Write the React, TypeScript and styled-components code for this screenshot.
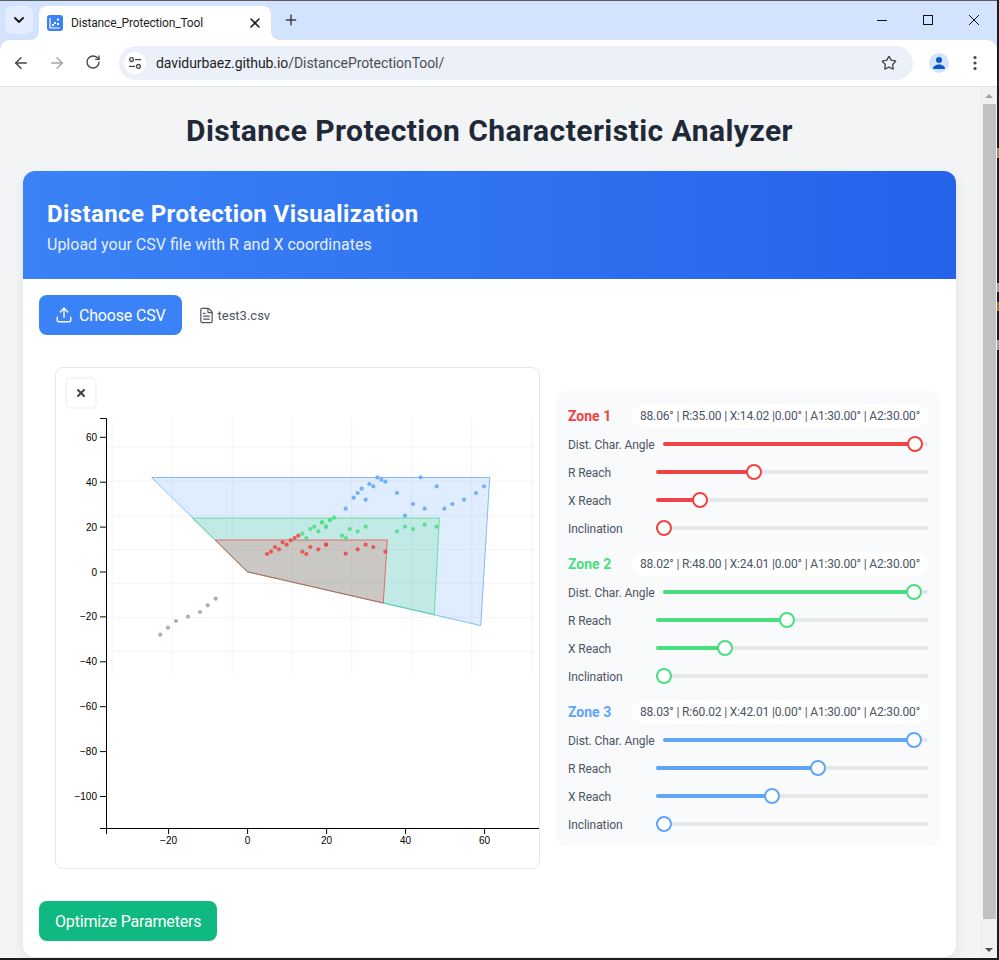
import React from "react";
import styled, { createGlobalStyle } from "styled-components";
import { ArrowLeft, ArrowRight, RotateCw, Star, Upload, FileText, X, Plus, ChevronDown } from "lucide-react";

const Global = createGlobalStyle`
  html, body { margin: 0; padding: 0; width: 999px; height: 960px; overflow: hidden; background: #1c1c1c; }
  * { box-sizing: border-box; }
`;

const Frame = styled.div`
  width: 999px;
  height: 960px;
  overflow: hidden;
  background: #1c1c1c;
  display: flex;
  align-items: flex-start;
`;
const Win = styled.div`
  width: 997px;
  height: 958px;
  flex: none;
  display: flex;
  flex-direction: column;
  overflow: hidden;
  background: #d3e3fd;
  border-top: 1px solid #5c5c60;
  font-family: "Roboto", "Liberation Sans", sans-serif;
`;
const DesktopEdge = styled.div`
  width: 2px;
  height: 960px;
  flex: none;
  background: linear-gradient(
    180deg,
    #1c1c1c 148px,
    #a08868 148px 158px,
    #1c1c1c 158px 283px,
    #8fa3a8 283px 292px,
    #1c1c1c 292px 302px,
    #8f7438 302px 311px,
    #1c1c1c 311px 340px,
    #8fa3a8 340px 350px,
    #1c1c1c 350px
  );
`;
const TabStrip = styled.div`
  height: 39px;
  flex: none;
  display: flex;
  align-items: flex-start;
  background: #d3e3fd;
  padding: 5px 0 0 5px;
`;
const TabMenu = styled.div`
  width: 28px;
  height: 28px;
  border-radius: 8px;
  background: #e4edfd;
  color: #1f1f1f;
  display: flex;
  align-items: center;
  justify-content: center;
`;
const Tab = styled.div`
  position: relative;
  width: 232px;
  height: 34px;
  margin-left: 6px;
  border-radius: 8px 8px 0 0;
  background: #fff;
  display: flex;
  align-items: center;
  padding: 0 8px 0 8px;
  color: #1f1f1f;
  &::before,
  &::after {
    content: "";
    position: absolute;
    bottom: 0;
    width: 8px;
    height: 8px;
  }
  &::before {
    left: -8px;
    background: radial-gradient(circle at 0 0, #d3e3fd 7.5px, #fff 8px);
  }
  &::after {
    right: -8px;
    background: radial-gradient(circle at 100% 0, #d3e3fd 7.5px, #fff 8px);
  }
`;
const TabTitle = styled.span`
  flex: 1;
  margin-left: 8px;
  font-size: 12px;
  letter-spacing: -0.17px;
  white-space: nowrap;
`;
const NewTab = styled.div`
  width: 20px;
  height: 28px;
  margin-left: 10px;
  display: flex;
  align-items: center;
  justify-content: center;
  color: #3c4043;
`;
const Controls = styled.div`
  margin-left: auto;
  display: flex;
  height: 28px;
  align-items: center;
`;
const Control = styled.div`
  width: 46px;
  height: 28px;
  display: flex;
  align-items: center;
  justify-content: center;
`;
const ToolBar = styled.div`
  height: 46px;
  flex: none;
  display: flex;
  align-items: center;
  background: #fff;
  border-radius: 10px 10px 0 0;
  padding: 0 12px 0 0;
`;
const NavButton = styled.div<{ $muted?: boolean }>`
  width: 36px;
  display: flex;
  justify-content: center;
  color: ${(p) => (p.$muted ? "#a5a7aa" : "#474747")};
`;
const NavGroup = styled.div`
  display: flex;
  margin-left: 3px;
  width: 116px;
`;
const Omnibox = styled.div`
  width: 794px;
  height: 34px;
  border-radius: 17px;
  background: #ebf0f9;
  display: flex;
  align-items: center;
  padding: 0 16px 0 5px;
  font-size: 14px;
  letter-spacing: -0.07px;
  color: #1f1f1f;
`;
const SiteIcon = styled.div`
  width: 22px;
  height: 22px;
  border-radius: 50%;
  background: #fff;
  display: flex;
  align-items: center;
  justify-content: center;
  margin-right: 10px;
`;
const Host = styled.span`
  color: #1f1f1f;
`;
const Path = styled.span`
  flex: 1;
  color: #4b4f54;
`;
const Avatar = styled.div`
  width: 20px;
  height: 20px;
  border-radius: 50%;
  background: #d3e3fd;
  margin-left: 16px;
  display: flex;
  align-items: center;
  justify-content: center;
`;
const MenuDots = styled.div`
  margin-left: 24px;
  display: flex;
  align-items: center;
`;
const Viewport = styled.div`
  flex: 1;
  min-height: 0;
  display: flex;
  border-top: 1px solid #e1e3e1;
`;
const Page = styled.main`
  width: 980px;
  flex: none;
  height: 100%;
  overflow: hidden;
  background: #f3f4f6;
  padding: 26px 24px 0 23px;
`;
const Heading = styled.h1`
  margin: 0 0 22px;
  font-size: 30px;
  line-height: 36px;
  font-weight: 700;
  letter-spacing: 0.45px;
  color: #1f2937;
  text-align: center;
`;
const Card = styled.section`
  background: #fff;
  border-radius: 12px;
  overflow: hidden;
  box-shadow: 0 4px 12px rgba(0, 0, 0, 0.08);
  padding-bottom: 16px;
`;
const Banner = styled.header`
  height: 108px;
  background: linear-gradient(90deg, #3b82f6, #2563eb);
  color: #fff;
  padding: 29px 24px 0 24px;
`;
const BannerTitle = styled.h2`
  margin: 0;
  font-size: 24px;
  line-height: 28px;
  font-weight: 700;
  letter-spacing: 0.4px;
`;
const BannerSub = styled.p`
  margin: 5px 0 0;
  font-size: 16px;
  line-height: 24px;
  color: #e5efff;
`;
const Body = styled.div`
  padding: 16px 16px 0;
`;
const FileRow = styled.div`
  display: flex;
  align-items: center;
`;
const PrimaryButton = styled.button<{ $bg: string }>`
  height: 40px;
  border: 0;
  border-radius: 8px;
  background: ${(p) => p.$bg};
  color: #fff;
  font-family: inherit;
  font-size: 16px;
  letter-spacing: -0.18px;
  display: inline-flex;
  align-items: center;
  gap: 6px;
  padding: 0 16px;
`;
const FileName = styled.span`
  margin-left: 16px;
  display: inline-flex;
  align-items: center;
  gap: 3px;
  font-size: 13px;
  color: #4b5563;
`;
const Workspace = styled.div`
  margin-top: 16px;
  padding: 16px 0 16px 16px;
  display: flex;
  align-items: center;
  gap: 16px;
`;
const ChartCard = styled.div`
  width: 485px;
  height: 502px;
  flex: none;
  border: 1px solid #e5e7eb;
  border-radius: 8px;
  background: #fff;
`;
const ChartTools = styled.div`
  padding: 9px 9px 0;
  height: 41px;
`;
const IconButton = styled.div`
  width: 32px;
  height: 32px;
  border: 2px solid #f3f4f6;
  border-radius: 6px;
  background: #fff;
  color: #374151;
  display: flex;
  align-items: center;
  justify-content: center;
`;
const ChartSvg = styled.svg`
  display: block;
  font-family: "Liberation Sans", Arial, sans-serif;
  font-size: 10px;
`;
const Panel = styled.div`
  width: 384px;
  flex: none;
  background: #f9fafb;
  border-radius: 8px;
  padding: 13px 12px 11px;
  display: flex;
  flex-direction: column;
  gap: 14px;
`;
const ZoneBlock = styled.div`
  display: flex;
  flex-direction: column;
  gap: 8px;
`;
const ZoneHead = styled.div`
  height: 24px;
  display: flex;
  align-items: center;
  justify-content: space-between;
  margin-bottom: -2px;
`;
const ZoneName = styled.span<{ $c: string }>`
  font-size: 14px;
  font-weight: 700;
  white-space: nowrap;
  color: ${(p) => p.$c};
`;
const Pill = styled.span`
  height: 24px;
  border-radius: 12px;
  background: #fff;
  padding: 4px 8px;
  font-size: 12px;
  line-height: 16px;
  letter-spacing: -0.16px;
  color: #4b5563;
  white-space: nowrap;
`;
const SliderRow = styled.div`
  height: 20px;
  display: flex;
  align-items: center;
  gap: 8px;
`;
const SliderLabel = styled.span`
  min-width: 80px;
  padding-top: 1px;
  font-size: 12px;
  letter-spacing: -0.08px;
  color: #4b5563;
  white-space: nowrap;
`;
const Track = styled.div`
  flex: 1;
  height: 4px;
  border-radius: 2px;
  background: #e5e7eb;
  position: relative;
  top: -0.5px;
`;
const Fill = styled.div<{ $c: string }>`
  position: absolute;
  left: 0;
  top: 0;
  bottom: 0;
  border-radius: 2px;
  background: ${(p) => p.$c};
`;
const Thumb = styled.div<{ $c: string }>`
  position: absolute;
  top: -6px;
  width: 16px;
  height: 16px;
  border-radius: 50%;
  background: #fff;
  border: 2px solid ${(p) => p.$c};
`;
const OptimizeRow = styled.div`
  margin-top: 16px;
`;
const Scrollbar = styled.div`
  width: 17px;
  flex: none;
  background: #f1f1f1;
  display: flex;
  flex-direction: column;
  align-items: center;
  padding: 0 0 0 1px;
`;
const ScrollArrow = styled.div<{ $down?: boolean; $c: string }>`
  height: 17px;
  flex: none;
  display: flex;
  align-items: center;
  justify-content: center;
  &::before {
    content: "";
    border-left: 4px solid transparent;
    border-right: 4px solid transparent;
    ${(p) => (p.$down ? `border-top: 4px solid ${p.$c};` : `border-bottom: 4px solid ${p.$c};`)}
  }
`;
const ScrollThumb = styled.div`
  width: 13px;
  height: 815px;
  background: #c1c1c1;
`;
const ScrollGap = styled.div`
  flex: 1;
`;

const zones = [
  {
    name: "Zone 1",
    color: "#ef4444",
    info: "88.06° | R:35.00 | X:14.02 |0.00° | A1:30.00° | A2:30.00°",
    vals: [0.98, 0.35, 0.1402, 0],
    poly: "215.3,540 387.3,540 383.3,603 247.4,571.8",
  },
  {
    name: "Zone 2",
    color: "#4ade80",
    info: "88.02° | R:48.00 | X:24.01 |0.00° | A1:30.00° | A2:30.00°",
    vals: [0.976, 0.48, 0.2401, 0],
    poly: "192.3,518 439.4,518 434.3,614.5 247.4,571.8",
  },
  {
    name: "Zone 3",
    color: "#60a5fa",
    info: "88.03° | R:60.02 | X:42.01 |0.00° | A1:30.00° | A2:30.00°",
    vals: [0.976, 0.6002, 0.4201, 0],
    poly: "151.7,477.5 489.7,477.5 480.8,625.6 247.4,571.8",
  },
];
const labels = ["Dist. Char. Angle", "R Reach", "X Reach", "Inclination"];

const z4 = (p: number[][]) => p.map(([x, y]) => [130 + x / 3, 460 + y / 3]);
const z5 = (p: number[][]) => p.map(([x, y]) => [320 + x / 3, 460 + y / 3]);

const grayPts = z4([[91,524],[114,503],[138,483],[174,470],[210,456],[233,436],[257,416]]);
const redPts = [
  ...z4([[411,282],[423,275],[435,261],[447,268],[458,247],[470,254],[482,241],[494,234],[505,227],[517,275],[529,282],[541,261],[565,268],[588,254]]),
  ...z5([[18,254],[77,281],[113,268],[137,254],[160,261],[196,275]]),
];
const greenPts = [
  ...z4([[517,221],[529,234],[541,207],[553,200],[565,214],[576,187],[588,200],[600,180]]),
  ...z5([[6,187],[18,200],[30,180],[42,173],[66,227],[78,234],[89,207],[113,214],[137,200],[231,214],[255,200],[279,207],[314,194],[350,200]]),
];
const bluePts = z5([[77,146],[101,113],[113,99],[125,86],[137,119],[148,72],[160,79],[172,52],[184,59],[196,65],[231,99],[255,167],[279,132],[302,52],[314,146],[350,79],[373,146],[397,132],[432,119],[468,99],[492,79]]);

const gridX = [112, 172.3, 232.2, 292, 351.7, 411.7, 471.7, 531.5];
const gridY = [447, 481, 515.5, 549.4, 583.3, 617.3, 651.3];
const xTicks = [-20, 0, 20, 40, 60];
const yTicks = [60, 40, 20, 0, -20, -40, -60, -80, -100];
const px = (v: number) => 247.6 + 3.95 * v;
const py = (v: number) => 572 - 2.245 * v;
const fmt = (v: number) => (v < 0 ? `\u2212${-v}` : `${v}`);

function Dots({ pts, color }: { pts: number[][]; color: string }) {
  return (
    <g fill={color} fillOpacity={0.85}>
      {pts.map(([x, y], i) => (
        <circle key={i} cx={x} cy={y} r={2.1} />
      ))}
    </g>
  );
}

function Chart() {
  return (
    <ChartSvg width={483} height={459} viewBox="56 409 483 459">
      <g stroke="#f3f4f6" strokeWidth={1}>
        {gridX.map((x) => (
          <line key={x} x1={x} x2={x} y1={418} y2={675} />
        ))}
        {gridY.map((y) => (
          <line key={y} x1={106} x2={535} y1={y} y2={y} />
        ))}
      </g>
      {[...zones].reverse().map((z) => (
        <polygon key={z.name} points={z.poly} fill={z.color} fillOpacity={0.2} stroke={z.color} strokeOpacity={0.75} strokeWidth={1} />
      ))}
      <Dots pts={grayPts} color="#94a3b8" />
      <Dots pts={bluePts} color="#60a5fa" />
      <Dots pts={greenPts} color="#4ade80" />
      <Dots pts={redPts} color="#ef4444" />
      <path d="M100 418.5H106.5V828.5H100M106.5 834V828.5H539" fill="none" stroke="#000" strokeWidth={1} />
      {yTicks.map((v) => (
        <g key={v}>
          <line x1={100} x2={106} y1={py(v)} y2={py(v)} stroke="#000" />
          <text x={97} y={py(v) + 3.5} textAnchor="end" fill="#000">
            {fmt(v)}
          </text>
        </g>
      ))}
      {xTicks.map((v) => (
        <g key={v}>
          <line x1={px(v)} x2={px(v)} y1={828} y2={834} stroke="#000" />
          <text x={px(v)} y={844} textAnchor="middle" fill="#000">
            {fmt(v)}
          </text>
        </g>
      ))}
    </ChartSvg>
  );
}

function Favicon() {
  return (
    <svg width="16" height="16" viewBox="0 0 16 16">
      <rect width="16" height="16" rx="3" fill="#3b82f6" />
      <path d="M3 3v10h10" fill="none" stroke="#fff" strokeWidth="1.2" />
      <g fill="#fff">
        <rect x="5" y="9" width="2" height="2" />
        <rect x="7" y="7" width="2" height="2" />
        <rect x="10" y="8" width="2" height="2" />
        <rect x="10" y="3.5" width="2" height="2" />
      </g>
    </svg>
  );
}

function Tune() {
  return (
    <svg width="14" height="14" viewBox="0 0 14 14" fill="none" stroke="#474747" strokeWidth="1.3">
      <circle cx="3.6" cy="3.6" r="1.9" />
      <path d="M7 3.6h6" />
      <circle cx="10.4" cy="10.4" r="1.9" />
      <path d="M1 10.4h6" />
    </svg>
  );
}

export default function App() {
  return (
    <Frame>
      <Global />
      <Win>
        <TabStrip>
          <TabMenu>
            <ChevronDown size={16} strokeWidth={3} />
          </TabMenu>
          <Tab>
            <Favicon />
            <TabTitle>Distance_Protection_Tool</TabTitle>
            <X size={16} strokeWidth={2.4} />
          </Tab>
          <NewTab>
            <Plus size={16} strokeWidth={2.2} />
          </NewTab>
          <Controls>
            <Control>
              <svg width="12" height="12" viewBox="0 0 12 12">
                <path d="M1 6.5h10" stroke="#111" strokeWidth="1" />
              </svg>
            </Control>
            <Control>
              <svg width="12" height="12" viewBox="0 0 12 12" fill="none">
                <rect x="1.5" y="1.5" width="9" height="9" stroke="#111" strokeWidth="1" />
              </svg>
            </Control>
            <Control>
              <svg width="12" height="12" viewBox="0 0 12 12">
                <path d="M1 1l10 10M11 1L1 11" stroke="#111" strokeWidth="1" />
              </svg>
            </Control>
          </Controls>
        </TabStrip>
        <ToolBar>
          <NavGroup>
            <NavButton>
              <ArrowLeft size={18} strokeWidth={2} />
            </NavButton>
            <NavButton $muted>
              <ArrowRight size={18} strokeWidth={2} />
            </NavButton>
            <NavButton>
              <RotateCw size={16} strokeWidth={2} />
            </NavButton>
          </NavGroup>
          <Omnibox>
            <SiteIcon>
              <Tune />
            </SiteIcon>
            <Host>davidurbaez.github.io</Host>
            <Path>/DistanceProtectionTool/</Path>
            <Star size={16} strokeWidth={2} color="#474747" />
          </Omnibox>
          <Avatar>
            <svg width="14" height="14" viewBox="0 0 14 14" fill="#0b57d0">
              <circle cx="7" cy="4" r="3" />
              <path d="M1 13c0-3 3-4.5 6-4.5s6 1.500 6 4.500z" />
            </svg>
          </Avatar>
          <MenuDots>
            <svg width="4" height="16" viewBox="0 0 4 16" fill="#474747">
              <circle cx="2" cy="2.500" r="1.600" />
              <circle cx="2" cy="8" r="1.600" />
              <circle cx="2" cy="13.500" r="1.600" />
            </svg>
          </MenuDots>
        </ToolBar>
        <Viewport>
          <Page>
            <Heading>Distance Protection Characteristic Analyzer</Heading>
            <Card>
              <Banner>
                <BannerTitle>Distance Protection Visualization</BannerTitle>
                <BannerSub>Upload your CSV file with R and X coordinates</BannerSub>
              </Banner>
              <Body>
                <FileRow>
                  <PrimaryButton $bg="#3b82f6">
                    <Upload size={18} strokeWidth={1.8} />
                    Choose CSV
                  </PrimaryButton>
                  <FileName>
                    <FileText size={17} strokeWidth={1.7} />
                    test3.csv
                  </FileName>
                </FileRow>
                <Workspace>
                  <ChartCard>
                    <ChartTools>
                      <IconButton>
                        <X size={12} strokeWidth={4} />
                      </IconButton>
                    </ChartTools>
                    <Chart />
                  </ChartCard>
                  <Panel>
                    {zones.map((z) => (
                      <ZoneBlock key={z.name}>
                        <ZoneHead>
                          <ZoneName $c={z.color}>{z.name}</ZoneName>
                          <Pill>{z.info}</Pill>
                        </ZoneHead>
                        {labels.map((l, i) => (
                          <SliderRow key={l}>
                            <SliderLabel>{l}</SliderLabel>
                            <Track>
                              <Fill $c={z.color} style={{ width: `calc(8px + (100% - 16px) * ${z.vals[i]})` }} />
                              <Thumb $c={z.color} style={{ left: `calc((100% - 16px) * ${z.vals[i]})` }} />
                            </Track>
                          </SliderRow>
                        ))}
                      </ZoneBlock>
                    ))}
                  </Panel>
                </Workspace>
                <OptimizeRow>
                  <PrimaryButton $bg="#10b981">Optimize Parameters</PrimaryButton>
                </OptimizeRow>
              </Body>
            </Card>
          </Page>
          <Scrollbar>
            <ScrollArrow $c="#a3a3a3" />
            <ScrollThumb />
            <ScrollGap />
            <ScrollArrow $down $c="#505050" />
          </Scrollbar>
        </Viewport>
      </Win>
      <DesktopEdge />
    </Frame>
  );
}
